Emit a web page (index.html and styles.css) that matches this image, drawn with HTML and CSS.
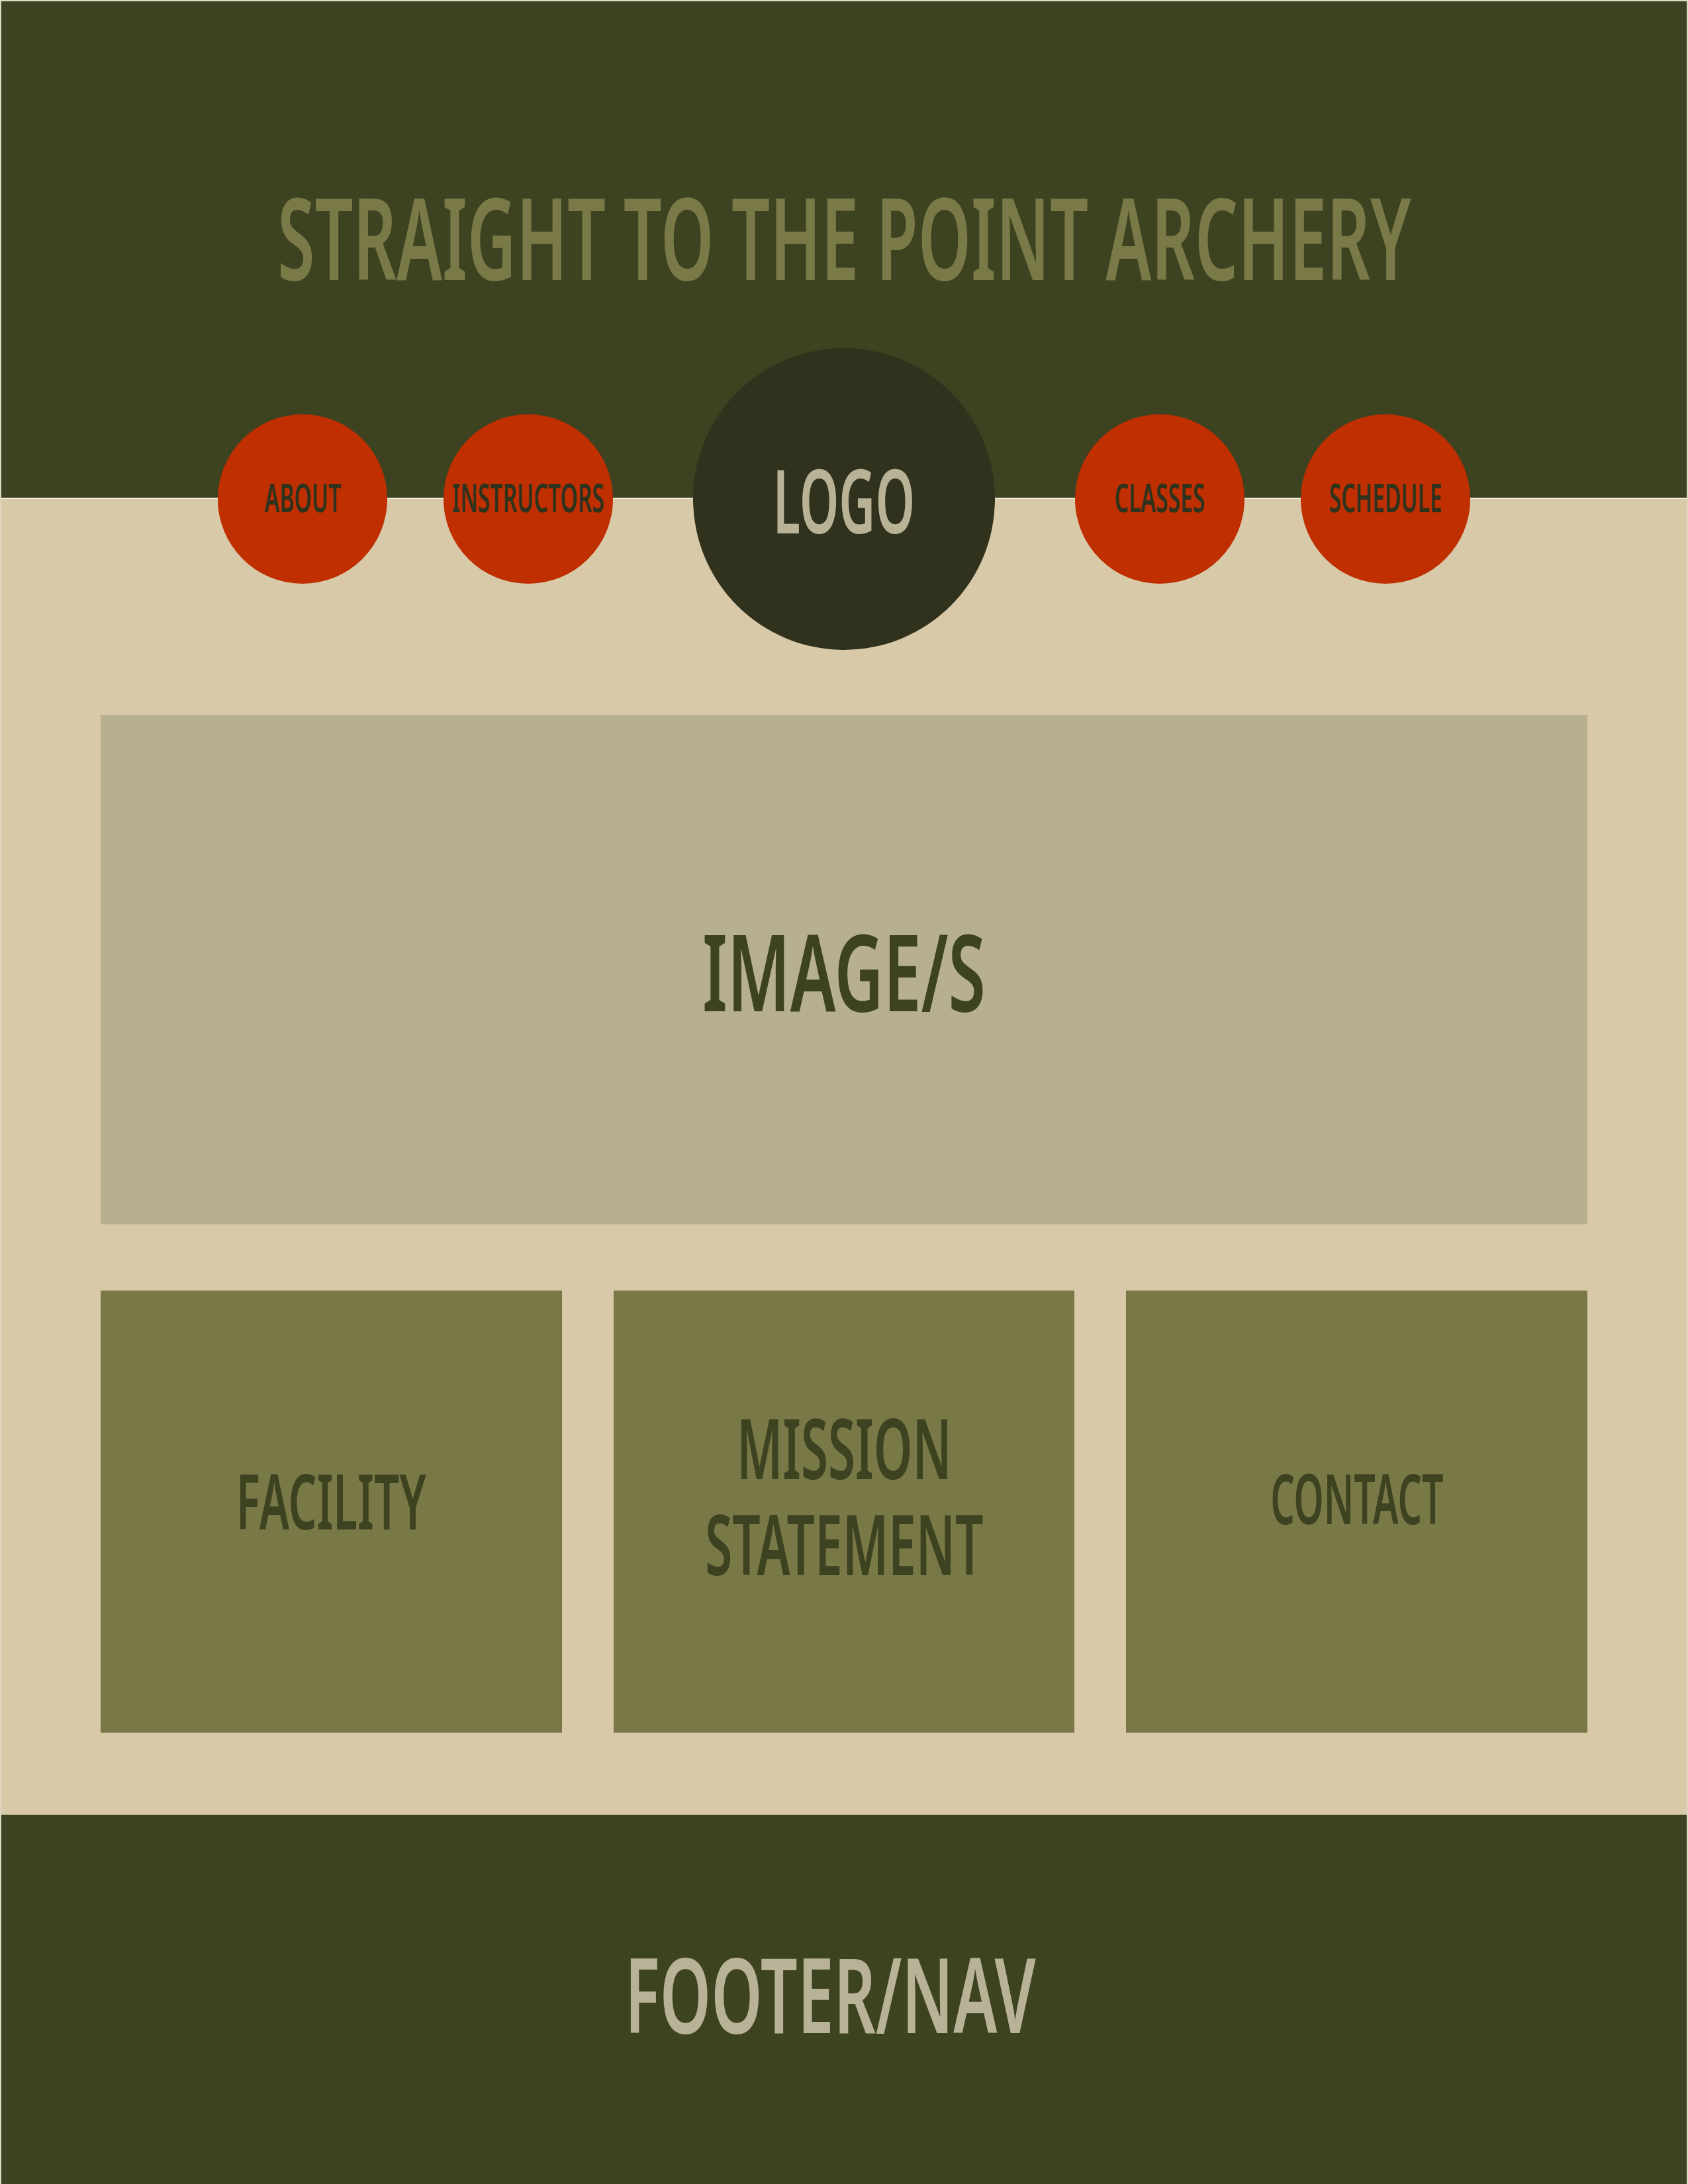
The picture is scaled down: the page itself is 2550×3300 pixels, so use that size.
FILE: index.html
```html
<!DOCTYPE html>
<html lang="en">
<head>
  <meta charset="UTF-8" />
  <title>Straight to the Point Archery</title>
  <link rel="stylesheet" href="styles.css">
</head>
<body>
  <div class="page">
    <!-- Header: title + circle nav sitting on the edge -->
    <header class="masthead">
      <h1><span class="narrow">STRAIGHT TO THE POINT ARCHERY</span></h1>
      <nav class="circle-nav">
        <a class="nav-dot" href="#"><span class="narrow">ABOUT</span></a>
        <a class="nav-dot" href="#"><span class="narrow">INSTRUCTORS</span></a>
        <div class="logo"><span class="narrow">LOGO</span></div>
        <a class="nav-dot" href="#"><span class="narrow">CLASSES</span></a>
        <a class="nav-dot" href="#"><span class="narrow">SCHEDULE</span></a>
      </nav>
    </header>

    <main class="content">
      <section class="hero"><span class="narrow">IMAGE/S</span></section>

      <div class="cards">
        <section class="card card-facility"><span class="narrow">FACILITY</span></section>
        <section class="card card-mission">
          <span class="narrow">
            <span class="line">MISSION</span>
            <span class="line">STATEMENT</span>
          </span>
        </section>
        <section class="card card-contact"><span class="narrow">CONTACT</span></section>
      </div>
    </main>

    <footer class="site-footer"><span class="narrow">FOOTER/NAV</span></footer>
  </div>
</body>
</html>
```

FILE: styles.css
```css
/* ===== base ===== */
body {
  margin: 0;
  background: #dcd8c2;
  font-family: "Noto Sans", "DejaVu Sans", sans-serif;
  font-weight: 600;
  overflow-x: hidden;
}

.page {
  margin: 2px 2px 0;
}

/* no condensed face installed, so squeeze the letters instead */
.narrow {
  display: inline-block;
  white-space: nowrap;
  transform: scaleX(0.57);
}

/* ===== header ===== */
.masthead {
  /* dark band, thin light rule, then beige under the circles */
  background: linear-gradient(to bottom,
    #3d4220 0, #3d4220 750px,
    #f1ecdb 750px, #f1ecdb 752px,
    #d8c9a8 752px);
  padding-top: 268px;
  overflow: hidden;
}

.masthead h1 {
  margin: 0;
  color: #7a7a48;
  font-size: 172px;
  font-weight: 600;
  line-height: 172px;
  display: flex;
  justify-content: center;
}
.masthead h1 .narrow { transform: scaleX(0.594); }

.circle-nav {
  margin-top: 84px;
  display: flex;
  align-items: center;
  justify-content: center;
  gap: 85px;
}

.nav-dot {
  flex: none;
  width: 256px;
  height: 256px;
  border-radius: 50%;
  background: #c02f00;
  color: #2f321d;
  font-size: 59px;
  text-decoration: none;
  display: flex;
  align-items: center;
  justify-content: center;
  padding-bottom: 6px;
  box-sizing: border-box;
}

.logo {
  flex: none;
  width: 456px;
  height: 456px;
  margin: 0 36px;
  border-radius: 50%;
  background: #30321d;
  color: #b8b296;
  font-size: 133px;
  display: flex;
  align-items: center;
  justify-content: center;
}

/* ===== content ===== */
.content {
  background: #d8c9a8;
  padding: 98px 150px 124px;
}

.hero {
  height: 770px;
  background: #b6af90;
  color: #3d4220;
  font-size: 161px;
  display: flex;
  align-items: center;
  justify-content: center;
}
.hero .narrow { transform: scaleX(0.635); }

.cards {
  margin-top: 100px;
  display: grid;
  grid-template-columns: repeat(3, minmax(0, 1fr));
  gap: 78px;
}

.card {
  height: 668px;
  box-sizing: border-box;
  padding-bottom: 36px;
  background: #797847;
  color: #3d4220;
  display: flex;
  align-items: center;
  justify-content: center;
  text-align: center;
  overflow: hidden;
}

.card-facility { font-size: 115px; }
.card-facility .narrow { transform: scaleX(0.585); }

.card-mission { font-size: 127px; padding-bottom: 52px; }
.card-mission .narrow { transform: scaleX(0.588); }
.card-mission .line {
  display: block;
  line-height: 145px;
}

.card-contact { font-size: 104px; padding-bottom: 44px; }
.card-contact .narrow { transform: scaleX(0.552); }

/* ===== footer ===== */
.site-footer {
  height: 558px;
  box-sizing: border-box;
  background: #3d4220;
  color: #b8b296;
  font-size: 158px;
  display: flex;
  align-items: center;
  justify-content: center;
  padding: 0 42px 22px 0;
}
.site-footer .narrow { transform: scaleX(0.623); }
```
